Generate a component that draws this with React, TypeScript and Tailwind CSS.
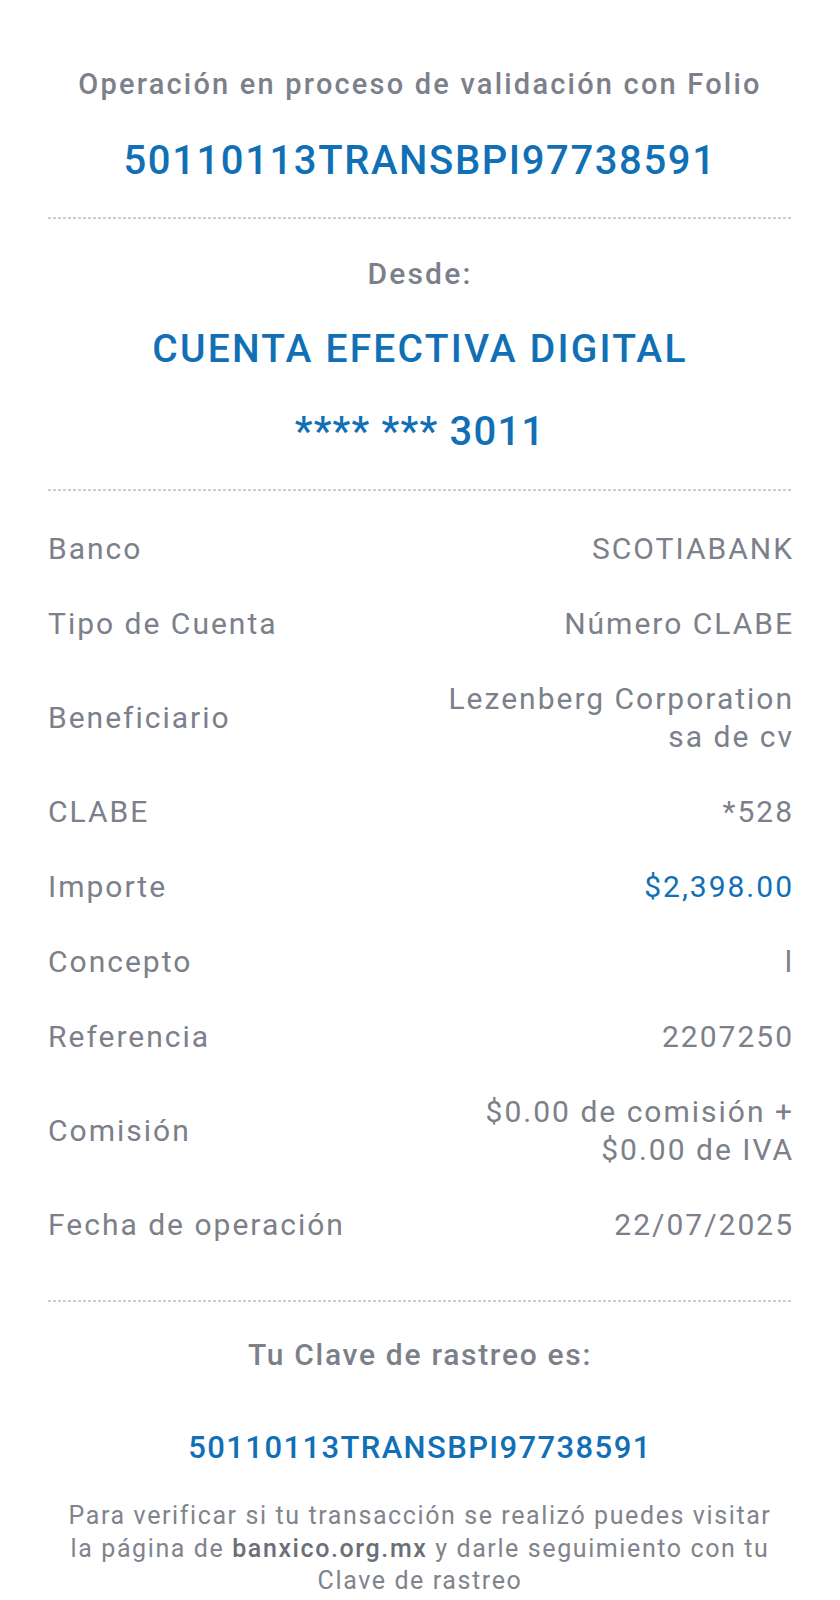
import React from "react";

const gray = "text-[#7c808a]";
const blue = "text-[#1170b5]";

const Dashes = ({ className = "" }: { className?: string }) => (
  <div
    className={`h-[2px] w-full bg-[linear-gradient(to_right,#cdcdcd_3px,transparent_3px)] bg-[length:5px_2px] ${className}`}
  />
);

type Row = { label: string; value: React.ReactNode; accent?: boolean };

const rows: Row[] = [
  { label: "Banco", value: "SCOTIABANK" },
  { label: "Tipo de Cuenta", value: "Número CLABE" },
  {
    label: "Beneficiario",
    value: (
      <>
        Lezenberg Corporation
        <br />
        sa de cv
      </>
    ),
  },
  { label: "CLABE", value: "*528" },
  { label: "Importe", value: "$2,398.00", accent: true },
  { label: "Concepto", value: "l" },
  { label: "Referencia", value: "2207250" },
  {
    label: "Comisión",
    value: (
      <>
        $0.00 de comisión +
        <br />
        $0.00 de IVA
      </>
    ),
  },
  { label: "Fecha de operación", value: "22/07/2025" },
];

const App = () => {
  return (
    <div className="min-h-[1600px] w-[840px] bg-white font-['Roboto',sans-serif]">
      <div className="flex flex-col px-[48px] pt-[66px] pb-10">
        <p className={`text-center text-[29px] leading-[36px] font-medium tracking-[2.2px] ${gray}`}>
          Operación en proceso de validación con Folio
        </p>
        <p className={`mt-[35px] text-center text-[40px] leading-[48px] font-medium tracking-[1.6px] ${blue}`}>
          50110113TRANSBPI97738591
        </p>
        <Dashes className="mt-[32px]" />

        <p className={`mt-[35px] text-center text-[30px] leading-[40px] font-medium tracking-[2.2px] ${gray}`}>
          Desde:
        </p>
        <p className={`mt-[31px] text-center text-[39px] leading-[48px] font-medium tracking-[2.2px] ${blue}`}>
          CUENTA EFECTIVA DIGITAL
        </p>
        <p className={`mt-[35px] text-center text-[40px] leading-[48px] font-medium tracking-[1.2px] ${blue}`}>
          **** *** 3011
        </p>
        <Dashes className="mt-[33px]" />

        <div className="mt-[39px] flex flex-col gap-[37px]">
          {rows.map((r) => (
            <div
              key={r.label}
              className="flex items-center justify-between text-[30px] leading-[38px] tracking-[2px]"
            >
              <span className={gray}>{r.label}</span>
              <span className={`-mr-[2px] text-right ${r.accent ? blue : gray}`}>{r.value}</span>
            </div>
          ))}
        </div>
        <Dashes className="mt-[56px]" />

        <p className={`mt-[33px] text-center text-[30px] leading-[40px] font-medium tracking-[1.7px] ${gray}`}>
          Tu Clave de rastreo es:
        </p>
        <p className={`mt-[53px] text-center text-[31px] leading-[40px] font-medium tracking-[1.4px] ${blue}`}>
          50110113TRANSBPI97738591
        </p>
        <p className="mt-[32px] text-center text-[25px] leading-[32.5px] tracking-[1.6px] text-[#80848c]">
          Para verificar si tu transacción se realizó puedes visitar
          <br />
          la página de <span className="font-medium text-[#6b6f77]">banxico.org.mx</span> y darle
          seguimiento con tu
          <br />
          Clave de rastreo
        </p>
      </div>
    </div>
  );
};

export default App;
